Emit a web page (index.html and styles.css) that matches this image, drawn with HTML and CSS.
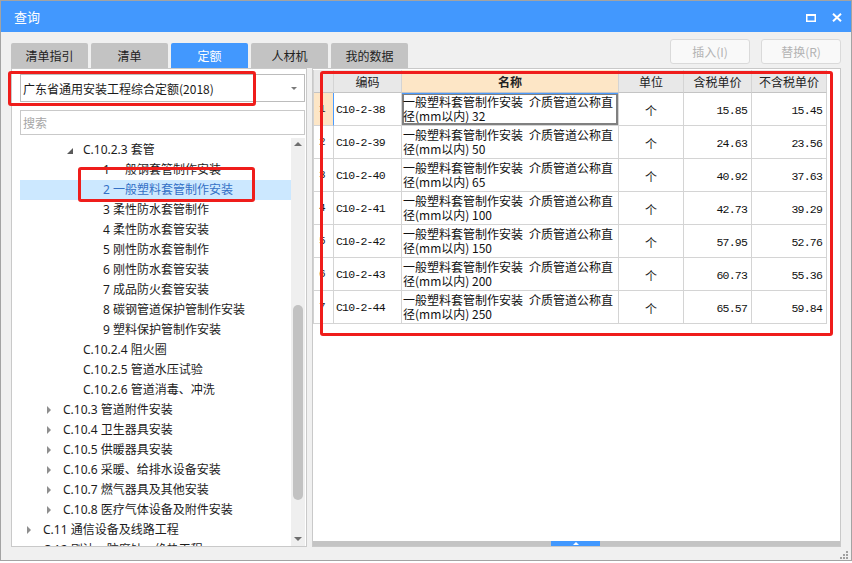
FILE: index.html
```html
<!DOCTYPE html>
<html lang="zh-CN">
<head>
<meta charset="utf-8">
<title>查询</title>
<link rel="stylesheet" href="styles.css">
</head>
<body>
<div class="window">
  <div class="titlebar">
    <span class="title">查询</span>
    <div class="winbtns">
      <svg class="ico" width="10" height="8" viewBox="0 0 10 8"><rect x="0.75" y="1" width="8.5" height="6.25" fill="none" stroke="#fff" stroke-width="1.5"/><rect x="0" y="0" width="10" height="2" fill="#fff"/></svg>
      <svg class="ico" width="10" height="9" viewBox="0 0 10 9"><path d="M1 0.8 L9 8.2 M9 0.8 L1 8.2" stroke="#fff" stroke-width="2" fill="none"/></svg>
    </div>
  </div>
  <div class="content">
    <div class="toprow">
      <div class="tabs">
        <div class="tab">清单指引</div>
        <div class="tab">清单</div>
        <div class="tab active">定额</div>
        <div class="tab">人材机</div>
        <div class="tab">我的数据</div>
      </div>
      <div class="actions">
        <button class="btn" disabled>插入(I)</button>
        <button class="btn" disabled>替换(R)</button>
      </div>
    </div>
    <div class="main">
      <div class="leftpanel">
        <div class="select"><span class="seltext">广东省通用安装工程综合定额(2018)</span><span class="caret"></span></div>
        <div class="search">搜索</div>
        <div class="treewrap">
          <div class="tree">
            <div class="row l2"><span class="tg"><span class="tri-e"></span></span>C.10.2.3 套管</div>
            <div class="row l3"><span class="tg"></span>1 一般钢套管制作安装</div>
            <div class="row l3 sel"><span class="tg"></span>2 一般塑料套管制作安装</div>
            <div class="row l3"><span class="tg"></span>3 柔性防水套管制作</div>
            <div class="row l3"><span class="tg"></span>4 柔性防水套管安装</div>
            <div class="row l3"><span class="tg"></span>5 刚性防水套管制作</div>
            <div class="row l3"><span class="tg"></span>6 刚性防水套管安装</div>
            <div class="row l3"><span class="tg"></span>7 成品防火套管安装</div>
            <div class="row l3"><span class="tg"></span>8 碳钢管道保护管制作安装</div>
            <div class="row l3"><span class="tg"></span>9 塑料保护管制作安装</div>
            <div class="row l2"><span class="tg"></span>C.10.2.4 阻火圈</div>
            <div class="row l2"><span class="tg"></span>C.10.2.5 管道水压试验</div>
            <div class="row l2"><span class="tg"></span>C.10.2.6 管道消毒、冲洗</div>
            <div class="row l1"><span class="tg"><span class="tri-c"></span></span>C.10.3 管道附件安装</div>
            <div class="row l1"><span class="tg"><span class="tri-c"></span></span>C.10.4 卫生器具安装</div>
            <div class="row l1"><span class="tg"><span class="tri-c"></span></span>C.10.5 供暖器具安装</div>
            <div class="row l1"><span class="tg"><span class="tri-c"></span></span>C.10.6 采暖、给排水设备安装</div>
            <div class="row l1"><span class="tg"><span class="tri-c"></span></span>C.10.7 燃气器具及其他安装</div>
            <div class="row l1"><span class="tg"><span class="tri-c"></span></span>C.10.8 医疗气体设备及附件安装</div>
            <div class="row l0"><span class="tg"><span class="tri-c"></span></span>C.11 通信设备及线路工程</div>
            <div class="row l0"><span class="tg"><span class="tri-c"></span></span>C.12 刷油、防腐蚀、绝热工程</div>
          </div>
          <div class="vscroll"><span class="up"></span><span class="thumb"></span><span class="down"></span></div>
        </div>
      </div>
      <div class="rightpanel">
        <div class="grid">
          <div class="c hd"></div>
          <div class="c hd">编码</div>
          <div class="c hd hname">名称</div>
          <div class="c hd">单位</div>
          <div class="c hd">含税单价</div>
          <div class="c hd">不含税单价</div>

          <div class="c rn cur">1</div>
          <div class="c code">C10-2-38</div>
          <div class="c nm focus"><span class="ln">一般塑料套管制作安装&ensp;介质管道公称直</span><span class="ln">径(mm以内) 32</span></div>
          <div class="c unit">个</div>
          <div class="c num">15.85</div>
          <div class="c num">15.45</div>

          <div class="c rn">2</div>
          <div class="c code">C10-2-39</div>
          <div class="c nm"><span class="ln">一般塑料套管制作安装&ensp;介质管道公称直</span><span class="ln">径(mm以内) 50</span></div>
          <div class="c unit">个</div>
          <div class="c num">24.63</div>
          <div class="c num">23.56</div>

          <div class="c rn">3</div>
          <div class="c code">C10-2-40</div>
          <div class="c nm"><span class="ln">一般塑料套管制作安装&ensp;介质管道公称直</span><span class="ln">径(mm以内) 65</span></div>
          <div class="c unit">个</div>
          <div class="c num">40.92</div>
          <div class="c num">37.63</div>

          <div class="c rn">4</div>
          <div class="c code">C10-2-41</div>
          <div class="c nm"><span class="ln">一般塑料套管制作安装&ensp;介质管道公称直</span><span class="ln">径(mm以内) 100</span></div>
          <div class="c unit">个</div>
          <div class="c num">42.73</div>
          <div class="c num">39.29</div>

          <div class="c rn">5</div>
          <div class="c code">C10-2-42</div>
          <div class="c nm"><span class="ln">一般塑料套管制作安装&ensp;介质管道公称直</span><span class="ln">径(mm以内) 150</span></div>
          <div class="c unit">个</div>
          <div class="c num">57.95</div>
          <div class="c num">52.76</div>

          <div class="c rn">6</div>
          <div class="c code">C10-2-43</div>
          <div class="c nm"><span class="ln">一般塑料套管制作安装&ensp;介质管道公称直</span><span class="ln">径(mm以内) 200</span></div>
          <div class="c unit">个</div>
          <div class="c num">60.73</div>
          <div class="c num">55.36</div>

          <div class="c rn">7</div>
          <div class="c code">C10-2-44</div>
          <div class="c nm"><span class="ln">一般塑料套管制作安装&ensp;介质管道公称直</span><span class="ln">径(mm以内) 250</span></div>
          <div class="c unit">个</div>
          <div class="c num">65.57</div>
          <div class="c num">59.84</div>
        </div>
        <div class="hband"><span class="handle"><span class="hup"></span></span></div>
      </div>
    </div>
  </div>
  <svg class="grip" width="9" height="8" viewBox="0 0 9 8"><rect x="6" y="0" width="2" height="2" fill="#a0a0a0"/><rect x="3" y="3" width="2" height="2" fill="#a0a0a0"/><rect x="6" y="3" width="2" height="2" fill="#a0a0a0"/><rect x="0" y="6" width="2" height="2" fill="#a0a0a0"/><rect x="3" y="6" width="2" height="2" fill="#a0a0a0"/><rect x="6" y="6" width="2" height="2" fill="#a0a0a0"/></svg>
</div>
<div class="mark m1"></div>
<div class="mark m2"></div>
<div class="mark m3"></div>
</body>
</html>
```
FILE: styles.css
```css
* { box-sizing: border-box; margin: 0; padding: 0; }
html, body { width: 852px; height: 563px; background: #fff; overflow: hidden; }
body {
  font-family: "Noto Sans", "Noto Sans CJK SC", sans-serif;
  font-size: 12px;
  color: #1e1e1e;
  position: relative;
}
.window {
  width: 852px;
  height: 561px;
  border: 1px solid #a3a3a3;
  background: #f0f0f0;
  display: flex;
  flex-direction: column;
  position: relative;
}
.titlebar {
  height: 31px;
  flex: none;
  background: #4298fe;
  display: flex;
  align-items: center;
  justify-content: space-between;
  padding: 0 9px 0 13px;
  color: #fff;
}
.title { font-family: "Noto Sans CJK SC", sans-serif; font-size: 13px; line-height: 16px; }
.winbtns { display: flex; align-items: center; gap: 16px; margin-top: 2px; }
.ico { display: block; }

.content { flex: 1; display: flex; flex-direction: column; padding: 7px 10px 13px 10px; }
.toprow { height: 29px; flex: none; display: flex; justify-content: space-between; }
.tabs { display: flex; gap: 3px; align-self: flex-end; }
.tab {
  width: 77px;
  height: 25px;
  background: #c3c3c3;
  border-radius: 2px 2px 0 0;
  display: flex;
  align-items: center;
  justify-content: center;
  font-family: "Noto Sans CJK SC", sans-serif;
  font-size: 12px;
  color: #222;
}
.tab.active { background: #4298fe; color: #fff; }
.actions { display: flex; gap: 11px; align-self: flex-start; }
.btn {
  width: 80px;
  height: 25px;
  background: #f9f9f9;
  border: 1px solid #dadada;
  border-radius: 3px;
  color: #b3b3b3;
  font-family: "Noto Sans CJK SC", sans-serif;
  font-size: 12px;
}

.main { height: 479px; flex: none; display: flex; gap: 5px; }
.leftpanel {
  width: 296px;
  flex: none;
  background: #fff;
  border: 1px solid #c9c9c9;
  padding: 5px 0 0 8px;
  display: flex;
  flex-direction: column;
}
.select {
  width: 285px;
  height: 28px;
  flex: none;
  border: 1px solid #bcbcbc;
  display: flex;
  align-items: center;
  justify-content: space-between;
  padding-left: 2px;
}
.seltext { font-family: "Noto Sans CJK SC", sans-serif; font-size: 12px; color: #1a1a1a; }
.caret {
  width: 0; height: 0;
  border-left: 3px solid transparent;
  border-right: 3px solid transparent;
  border-top: 3px solid #7a7a7a;
  margin-right: 7px;
}
.search {
  width: 285px;
  height: 25px;
  flex: none;
  margin-top: 8px;
  border: 1px solid #c9c9c9;
  padding-left: 2px;
  line-height: 23px;
  color: #a6a6a6;
  font-family: "Noto Sans CJK SC", sans-serif;
}
.treewrap { width: 285px; height: 408px; margin-top: 3px; display: flex; flex: none; }
.tree { width: 271px; padding-top: 2px; overflow: hidden; }
.row {
  height: 20px;
  line-height: 20px;
  display: flex;
  align-items: center;
  white-space: nowrap;
  color: #1c1c1c;
}
.row.sel { background: #cce8ff; color: #3470c6; }
.l0 { padding-left: 5px; }
.l1 { padding-left: 25px; }
.l2 { padding-left: 45px; }
.l3 { padding-left: 65px; }
.tg { width: 18px; height: 20px; flex: none; display: flex; align-items: center; padding-left: 2px; }
.tri-c {
  width: 0; height: 0;
  border-left: 4px solid #8e8e8e;
  border-top: 4px solid transparent;
  border-bottom: 4px solid transparent;
}
.tri-e {
  width: 0; height: 0;
  border-bottom: 6px solid #5a5a5a;
  border-left: 6px solid transparent;
  margin-top: 1px;
}
.vscroll { width: 14px; background: #efefef; display: flex; flex-direction: column; align-items: center; }
.up {
  width: 0; height: 0;
  border-left: 4px solid transparent;
  border-right: 4px solid transparent;
  border-bottom: 4px solid #6e6e6e;
  margin-top: 4px;
}
.thumb { width: 10px; height: 195px; background: #c2c2c2; border-radius: 5px; margin-top: 159px; }
.down {
  width: 0; height: 0;
  border-left: 4px solid transparent;
  border-right: 4px solid transparent;
  border-top: 4px solid #6e6e6e;
  margin-top: auto;
  margin-bottom: 5px;
}

.rightpanel {
  flex: 1;
  background: #fff;
  border: 1px solid #c9c9c9;
  display: flex;
  flex-direction: column;
}
.grid {
  display: grid;
  grid-template-columns: 20px 68px 217px 65px 68px 75px;
  grid-template-rows: 23px repeat(7, 33px);
  width: 514px;
  margin-top: 1px;
  border-left: 1px solid #d2d2d2;
}
.c {
  border-right: 1px solid #d4d4d4;
  border-bottom: 1px solid #d4d4d4;
  overflow: hidden;
  white-space: nowrap;
}
.hd {
  background: #e8e8e8;
  border-bottom-color: #c4c4c4;
  display: flex;
  align-items: center;
  justify-content: center;
  font-family: "Noto Sans CJK SC", sans-serif;
  font-size: 12px;
  color: #222;
}
.hd.hname { background: #fde6c6; font-weight: bold; }
.rn {
  display: flex;
  align-items: center;
  padding-left: 5px;
  font-family: "Liberation Mono", monospace;
  font-size: 11px;
  color: #222;
}
.rn.cur { background: #fde6c6; border-right-color: #4a9bff; }
.code, .num {
  display: flex;
  align-items: center;
  font-family: "Liberation Mono", monospace;
  font-size: 11.5px;
  letter-spacing: -0.8px;
  color: #111;
}
.code { padding-left: 2px; }
.num { justify-content: flex-end; padding-right: 4px; padding-top: 2px; }
.nm {
  display: flex;
  flex-direction: column;
  padding: 1px 1px 0 1px;
  font-family: "Noto Sans CJK SC", sans-serif;
  font-size: 12px;
  color: #111;
}
.ln { display: block; height: 14px; line-height: 15px; }
.nm.focus { box-shadow: inset 0 1px 0 #4a9bff, inset 0 0 0 2px #808080; }
.unit {
  display: flex;
  align-items: center;
  justify-content: center;
  padding-top: 2px;
  font-family: "Noto Sans CJK SC", sans-serif;
  font-size: 12px;
}
.hband { height: 5px; margin-top: auto; background: #c4c4c4; display: flex; }
.handle {
  width: 49px;
  height: 5px;
  margin-left: 238px;
  background: #4298fe;
  display: flex;
  align-items: flex-end;
  justify-content: center;
}
.hup {
  width: 0; height: 0;
  border-left: 3px solid transparent;
  border-right: 3px solid transparent;
  border-bottom: 3px solid #fff;
  margin-bottom: 1px;
}
.grip { position: absolute; right: 2px; bottom: 1px; }

.mark {
  position: absolute;
  border: 3px solid #ef1d1b;
  border-radius: 3px;
  pointer-events: none;
}
.m1 { left: 8px; top: 71px; width: 248px; height: 35px; }
.m2 { left: 78px; top: 167px; width: 177px; height: 35px; }
.m3 { left: 320px; top: 71px; width: 513px; height: 265px; }
```
